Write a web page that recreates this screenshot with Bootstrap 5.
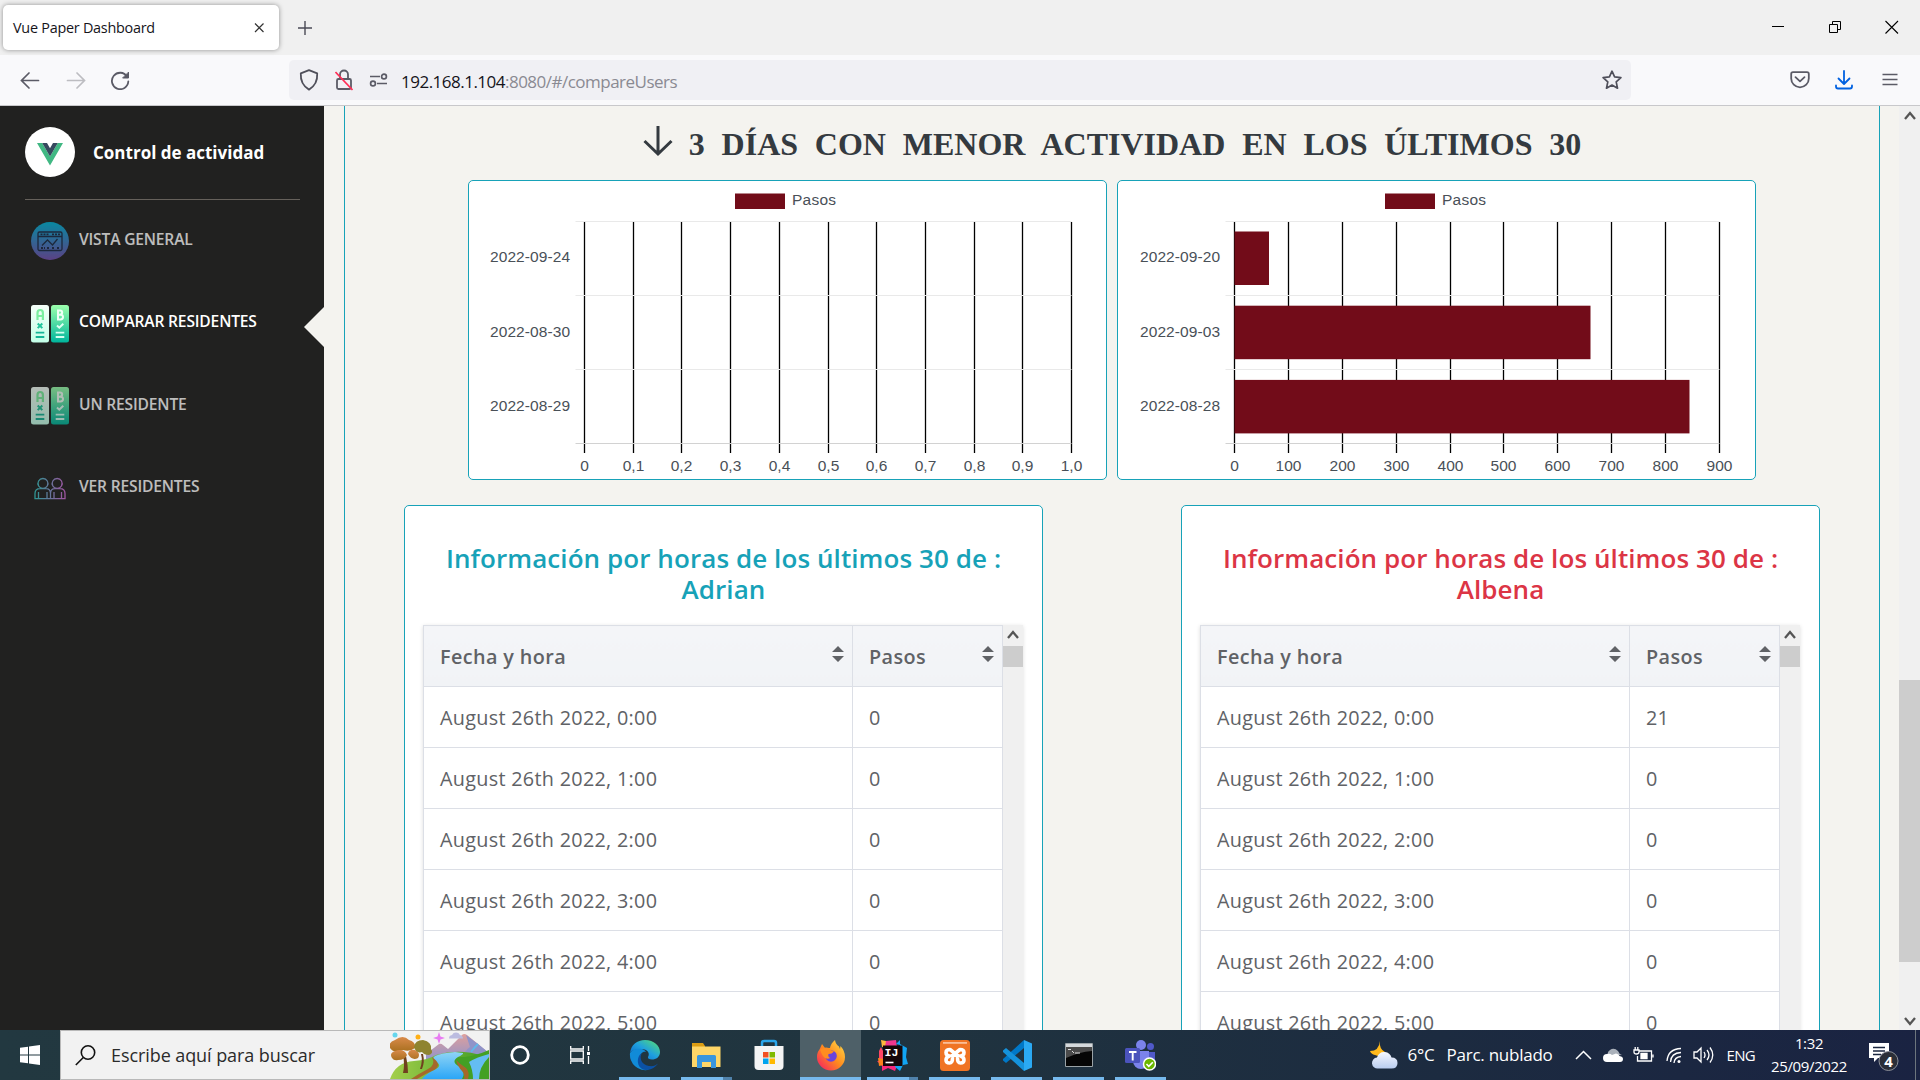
<!DOCTYPE html>
<html lang="es">
<head>
<meta charset="utf-8">
<title>Vue Paper Dashboard</title>
<link href="https://cdn.jsdelivr.net/npm/bootstrap@5.3.0/dist/css/bootstrap.min.css" rel="stylesheet">
<style>
  html, body { height: 1080px; overflow: hidden; }
  body { font-family: "Open Sans", "Noto Sans", sans-serif; background: #f4f3ef; color: #15141a; width: 1920px; }
  svg { display: block; flex: none; }
  .tabstrip { height: 55px; background: #f0f0f0; padding: 5px 21px 0 3px; }
  .tab-active { width: 276px; height: 45px; background: #fff; border-radius: 5px; box-shadow: 0 0 5px rgba(0,0,0,.4); padding: 0 13px 0 10px; margin-right: 18px; }
  .tab-title { font-size: 14.4px; letter-spacing: -.25px; padding-top: 1px; }
  .toolbar { height: 51px; background: #f9f9fb; border-bottom: 1px solid #c8c8cb; padding: 0 20px; color: #5b5b66; }
  .urlbar { width: 1342px; height: 40px; background: #f0f0f4; border-radius: 5px; padding: 0 9px 0 10px; margin-left: 159px; margin-right: 159px; }
  .url-text { font-size: 17px; color: #8a8a92; margin-left: 13px; line-height: 24px; letter-spacing: -.51px; padding-top: 3px; }
  .url-text b { font-weight: 400; color: #15141a; }
  .win-buttons { margin-top: 14px; gap: 44px; }
  .viewport { height: 924px; overflow: hidden; }
  .sidebar { width: 324px; background: #212120; padding: 21px 24px 0 25px; position: relative; }
  .logo-circle { width: 50px; height: 50px; background: #fff; border-radius: 50%; margin-right: 18px; }
  .brand { font-size: 17px; font-weight: 700; color: #fff; padding-top: 1px; }
  .side-rule { height: 1px; background: #66615b; margin-top: 22px; margin-bottom: 22px; }
  .side-item { height: 38px; margin-bottom: 44.5px; padding-left: 6px; color: #fff; opacity: .7; font-weight: 600; font-size: 15.6px; letter-spacing: -.18px; }
  .side-item span { margin-left: 10px; margin-top: -3px; }
  .side-item.current { opacity: 1; }
  .notch { position: absolute; right: 0; top: 201px; border: 20px solid transparent; border-left: 0; border-right-color: #f4f3ef; }
  .main-area { flex: none; width: 1575px; padding: 0 19px 0 20px; }
  .frame { height: 924px; border-left: 1px solid #17a2b8; border-right: 1px solid #17a2b8; overflow: hidden; }
  .headline { font-family: "Liberation Serif", serif; font-weight: 700; font-size: 32px; color: #343a40; height: 74px; padding-top: 15px; word-spacing: 8.8px; line-height: 46px; white-space: nowrap; }
  .panel { border: 1px solid #17a2b8; border-radius: 5px; background: #fff; width: 639px; flex: none; }
  .chart-row { gap: 10px; }
  .chart-panel { height: 300px; }
  .chart-panel text { font: 15.5px "Liberation Sans", Arial, sans-serif; fill: #495057; }
  .tables { padding: 0 59px; margin-top: 25px; }
  .hours { height: 700px; padding: 37px 18px 0 18px; }
  .hours h4 { font-size: 26px; line-height: 31px; font-weight: 600; letter-spacing: .08px; margin: 0 0 20px; height: 62px; }
  .teal { color: #17a2b8; } .rojo { color: #dc3545; }
  .scroller { width: 600px; box-shadow: 0 1px 4px rgba(0,0,0,.14); }
  .grid-hours { width: 579px; table-layout: fixed; font-size: 19.8px; letter-spacing: .3px; color: #606266; border-collapse: collapse; flex: none; align-self: flex-start; }
  .grid-hours td, .grid-hours th { height: 61px; border: 1px solid #dcdfe6; padding: 2px 8px 0 16px; vertical-align: middle; line-height: 28px; }
  .grid-hours th { background: linear-gradient(#f4f5f8, #f1f3f6); font-weight: 600; letter-spacing: .4px; }
  .sort-mark { margin-top: -6px; }
  .mini-bar { width: 21px; height: 600px; background: #f0f0f0; }
  .mini-bar svg { margin: 5px auto 7px; }
  .mini-bar i { display: block; height: 21px; background: #cdcdcd; }
  .page-bar { width: 21px; background: #f0f0f0; flex: none; padding-top: 5px; }
  .page-thumb { height: 282px; background: #cdcdcd; margin-top: 505px; }
  .flip { transform: scaleY(-1); }
  .taskbar { height: 50px; background: linear-gradient(90deg, #223840, #20343f 45%, #1c2b40 75%, #1a2342); color: #fff; }
  .start { width: 60px; }
  .searchbox { width: 430px; height: 50px; background: #f2f2f2; border: 1px solid #b9b9b9; color: #2b2b2b; padding-left: 14px; }
  .search-text { font-size: 18px; letter-spacing: -.08px; margin-left: 15px; }
  .task-view { margin: 0 28px 0 39px; }
  .task-app { width: 51px; height: 50px; margin-right: 11px; border-bottom: 3px solid #76b9ed; padding-top: 3px; }
  .task-app.plain { border-color: transparent; }
  .task-app.multi { border-image: linear-gradient(90deg, #76b9ed 79%, #5082ab 79%) 3; }
  .task-app.focused { width: 61px; margin: 0 6px 0 -5px; background: #4e6068; }
  .weather { font-size: 17px; letter-spacing: -.25px; }
  .lang { font-size: 15px; letter-spacing: -.7px; }
  .clock { font-size: 15px; line-height: 23px; width: 90px; letter-spacing: -.36px; margin-left: 9px; }
</style>
</head>
<body class="d-flex flex-column">
<svg width="0" height="0" class="position-absolute">
  <defs>
    <linearGradient id="gCircle" x1="0" y1="0" x2="0" y2="1"><stop offset="0" stop-color="#00b4d8"/><stop offset="1" stop-color="#7350b0"/></linearGradient>
    <linearGradient id="gA" x1="0" y1="0" x2="0" y2="1"><stop offset="0" stop-color="#f5fff8"/><stop offset="1" stop-color="#c3ffe8"/></linearGradient>
    <linearGradient id="gB" x1="0" y1="0" x2="0" y2="1"><stop offset="0" stop-color="#9cffac"/><stop offset="1" stop-color="#00b59c"/></linearGradient>
    <linearGradient id="gP" x1="0" y1="0" x2="1" y2="0"><stop offset="0" stop-color="#35c9c5"/><stop offset="1" stop-color="#d56ad8"/></linearGradient>
    <symbol id="ab" viewBox="0 0 38 38">
      <rect x="0" width="18" height="37.5" rx="2.5" fill="url(#gA)"/><rect x="20" width="18" height="37.5" rx="2.5" fill="url(#gB)"/>
      <path d="M6.500 15V8q0-3 2.700-3t2.700 3v7M6.500 11h5.500" fill="none" stroke="#7bee9f" stroke-width="2.200"/>
      <path d="M6.700 18.500l4.600 4.600m0-4.600l-4.600 4.600" stroke="#21c49b" stroke-width="2"/>
      <path d="M4.700 27.600h8.600M4.700 32h8.600" stroke="#14b597" stroke-width="1.800"/>
      <path d="M27 5.500v9h2.500q2.500 0 2.500-2.400t-2.500-2.400H27h2q2.200 0 2.200-2.100T29 5.500z" fill="none" stroke="#f0fff6" stroke-width="2"/>
      <path d="M26 20.500l2.300 2.200 4-4" fill="none" stroke="#e0fff3" stroke-width="2"/>
      <path d="M24.700 27.600h8.600M24.700 32h8.600" stroke="#d4fff0" stroke-width="1.800"/>
    </symbol>
    <symbol id="sorter" viewBox="0 0 12 16"><path d="M6 0l6 6H0zM6 16l6-6H0z" fill="#606266"/></symbol>
    <symbol id="chevUp" viewBox="0 0 12 9"><path d="M1 8l5-6 5 6" fill="none" stroke="#555" stroke-width="2.300"/></symbol>
    <linearGradient id="gEdge" x1="0" y1="1" x2="1" y2="0"><stop offset="0" stop-color="#0a5fc2"/><stop offset=".5" stop-color="#1e9fe0"/><stop offset="1" stop-color="#5be36c"/></linearGradient>
    <linearGradient id="gFox" x1="1" y1="0" x2="0" y2="1"><stop offset="0" stop-color="#ffe14a"/><stop offset=".5" stop-color="#ff8a1e"/><stop offset="1" stop-color="#f5146b"/></linearGradient>
    <linearGradient id="gRiver" x1="0" y1="0" x2="0" y2="1"><stop offset="0" stop-color="#8fd4f5"/><stop offset="1" stop-color="#2ba6f7"/></linearGradient>
    <linearGradient id="gMount" x1="0" y1="0" x2="0" y2="1"><stop offset="0" stop-color="#dfa09c"/><stop offset="1" stop-color="#8f93cc"/></linearGradient>
    <linearGradient id="gTree" x1="0" y1="0" x2="0" y2="1"><stop offset="0" stop-color="#d98a4a"/><stop offset="1" stop-color="#a9701f"/></linearGradient>
    <linearGradient id="gGrass" x1="0" y1="0" x2="1" y2="0"><stop offset="0" stop-color="#a4cf4c"/><stop offset="1" stop-color="#3f9c22"/></linearGradient>
    <linearGradient id="gCloud" x1="0" y1="0" x2="0" y2="1"><stop offset="0" stop-color="#f6f8ff"/><stop offset="1" stop-color="#b9cdf0"/></linearGradient>
  </defs>
</svg>

<header>
  <div class="tabstrip d-flex align-items-start">
    <div class="tab-active d-flex align-items-center justify-content-between">
      <span class="tab-title">Vue Paper Dashboard</span>
      <svg width="14" height="14" viewBox="0 0 14 14"><path d="M3 2.500l8.500 8.500m0-8.500L3 11" stroke="#333" stroke-width="1.200"/></svg>
    </div>
    <svg width="16" height="16" class="mt-3" viewBox="0 0 16 16"><path d="M8 0v14M1 7h14" stroke="#4a4a55" stroke-width="1.400"/></svg>
    <div class="win-buttons d-flex align-items-center ms-auto">
      <svg width="14" height="16"><path d="M1 7.500h12" stroke="#000"/></svg>
      <svg width="12" height="16" viewBox="0 0 12 16" fill="none" stroke="#000"><path d="M.5 5.500h8v8h-8zM3.500 5.500v-3h8v8h-3"/></svg>
      <svg width="14" height="16"><path d="M.5 2l12.500 12.500m0-12.500L.5 14.500" stroke="#000" stroke-width="1.100"/></svg>
    </div>
  </div>
  <div class="toolbar d-flex align-items-center">
    <svg width="20" height="20" viewBox="0 0 20 20" fill="none" stroke="#5b5b66" stroke-width="1.700" stroke-linecap="round"><path d="M1.500 10.500h17M9 3L1.500 10.500 9 18"/></svg>
    <svg width="20" height="20" style="margin-left:26px" viewBox="0 0 20 20" fill="none" stroke="#bdbdc1" stroke-width="1.700" stroke-linecap="round"><path d="M1.500 10.500h17M11 3l7.500 7.500L11 18"/></svg>
    <svg width="20" height="20" style="margin-left:24px" viewBox="0 0 20 20" fill="none" stroke="#5b5b66" stroke-width="1.800" stroke-linecap="round"><path d="M17 6.500A8.200 8.200 0 1 0 18.300 11.500"/><path d="M18.500 2.500V8H13z" fill="#5b5b66" stroke-width="1"/></svg>
    <div class="urlbar d-flex align-items-center">
      <svg width="20" height="22" viewBox="0 0 20 22" fill="none" stroke="#4f4f5a" stroke-width="1.800" stroke-linejoin="round"><path d="M10 1.200l8.200 3.200c.4 7-2 12.600-8.200 16.200C3.800 17 1.400 11.400 1.800 4.400z"/></svg>
      <svg width="18" height="22" style="margin-left:16px" viewBox="0 0 18 22" fill="none" stroke="#5b5b66" stroke-width="1.800"><rect x="2" y="10" width="14" height="10" rx="1.500"/><path d="M5 10V5.500a4 4 0 0 1 8 0V10"/><path d="M.5 3l17 18" stroke="#ff2d55" stroke-width="1.600"/></svg>
      <svg width="19" height="14" style="margin-left:16px" viewBox="0 0 19 14" fill="none" stroke="#5b5b66" stroke-width="1.700"><path d="M1 3.500h10M8 10.500h10"/><circle cx="15" cy="3.500" r="2.400"/><circle cx="4" cy="10.500" r="2.400"/></svg>
      <span class="url-text"><b>192.168.1.104</b>:8080/#/compareUsers</span>
      <svg width="20" height="20" class="ms-auto" viewBox="0 0 20 20" fill="none" stroke="#4f4f5a" stroke-width="1.700" stroke-linejoin="round"><path d="M10 1.200l2.600 5.700 6.300.7-4.700 4.200 1.300 6.400L10 15l-5.500 3.200 1.300-6.400L1.100 7.600l6.300-.7z"/></svg>
    </div>
    <svg width="20" height="18" viewBox="0 0 20 18" fill="none" stroke="#5b5b66" stroke-width="1.800" stroke-linecap="round" stroke-linejoin="round"><path d="M3 1.200h14q1.800 0 1.800 1.800v4.500a8.800 8.800 0 0 1-17.600 0V3Q1.200 1.200 3 1.200zM5.500 6.200L10 10.300l4.500-4.100"/></svg>
    <svg width="18" height="20" style="margin-left:25px" viewBox="0 0 18 20" fill="none" stroke="#0061e0" stroke-width="1.800" stroke-linecap="round" stroke-linejoin="round"><path d="M9 1v12.500M3.500 8.500L9 14l5.500-5.500M1 15.500v1q0 2 2 2h12q2 0 2-2v-1"/></svg>
    <svg width="16" height="14" style="margin-left:29px" viewBox="0 0 16 14" stroke="#5b5b66" stroke-width="1.600"><path d="M.5 1.500h15M.5 6.500h15M.5 11.500h15"/></svg>
  </div>
</header>

<div class="viewport d-flex">
  <aside class="sidebar flex-shrink-0">
    <div class="d-flex align-items-center">
      <div class="logo-circle d-flex align-items-center justify-content-center">
        <svg width="26" height="23" class="mt-1" viewBox="0 0 26 23"><path d="M0 0h5.200L13 13.500 20.800 0H26L13 22.500z" fill="#41b883"/><path d="M5.200 0H10l3 5.200L16 0h4.800L13 13.500z" fill="#35495e"/></svg>
      </div>
      <span class="brand">Control de actividad</span>
    </div>
    <div class="side-rule"></div>
    <div class="side-item d-flex align-items-center">
      <svg width="38" height="38" viewBox="0 0 38 38"><circle cx="19" cy="19" r="19" fill="url(#gCircle)"/><g fill="none" stroke="#1b2c48" stroke-width="1.300"><rect x="7" y="10" width="24" height="18.500" rx="1.500"/><path d="M7 14.500h24M11 23.500l5.500-5.500 5 5 5-6"/><path d="M9.500 12.300h9M21 12.300h8M10 26h4m2 0h3m2 0h3m2 0h3" stroke-width="1.800" stroke-dasharray="2 1"/></g></svg>
      <span>VISTA GENERAL</span>
    </div>
    <div class="side-item current d-flex align-items-center"><svg width="38" height="38"><use href="#ab"/></svg><span>COMPARAR RESIDENTES</span></div>
    <div class="side-item d-flex align-items-center"><svg width="38" height="38"><use href="#ab"/></svg><span>UN RESIDENTE</span></div>
    <div class="side-item d-flex align-items-center">
      <svg width="38" height="38" viewBox="0 0 38 38" fill="none" stroke="url(#gP)" stroke-width="1.300"><path d="M12 8.500a5 5 0 1 1-.1 0zM26.200 8.500a5 5 0 1 1-.1 0zM4 28.600v-5q0-5 5-5h6q4.500 0 4.500 5v5zM19.500 28.600v-5q0-5 4.500-5h5q5 0 5 5v5zM7.500 28v-6M16 28v-6M23 28v-6M30.500 28v-6"/></svg>
      <span>VER RESIDENTES</span>
    </div>
    <div class="notch"></div>
  </aside>

  <main class="main-area">
    <div class="frame">
      <div class="headline d-flex justify-content-center">
        <svg width="30" height="32" class="me-3 mt-1" viewBox="0 0 30 32" fill="none" stroke="#343a40" stroke-width="3"><path d="M15 1v27M1.500 16L15 29l13.500-13"/></svg>
        <span>3 DÍAS CON MENOR ACTIVIDAD EN LOS ÚLTIMOS 30</span>
      </div>
      <div class="chart-row d-flex justify-content-center">
        <div class="panel chart-panel" id="chartA"></div>
        <div class="panel chart-panel" id="chartB"></div>
      </div>
      <div class="tables d-flex justify-content-between">
        <section class="panel hours"><h4 class="teal text-center">Información por horas de los últimos 30 de :<br>Adrian</h4><div class="scroller d-flex" data-first="0"></div></section>
        <section class="panel hours"><h4 class="rojo text-center">Información por horas de los últimos 30 de :<br>Albena</h4><div class="scroller d-flex" data-first="21"></div></section>
      </div>
    </div>
  </main>
  <div class="page-bar d-flex flex-column align-items-center justify-content-between pb-1">
    <svg width="12" height="9"><use href="#chevUp"/></svg>
    <div class="page-thumb w-100"></div>
    <svg width="12" height="9" class="flip"><use href="#chevUp"/></svg>
  </div>
</div>

<footer class="taskbar d-flex align-items-center">
  <div class="start d-flex justify-content-center"><svg width="20" height="20" viewBox="0 0 20 20" fill="#fff"><path d="M0 2.800l8-1.100v7.800H0zM9 1.500L20 0v9.500H9zM0 10.500h8v7.800l-8-1.100zM9 10.500h11V20L9 18.500z"/></svg></div>
  <div class="searchbox d-flex align-items-center">
    <svg width="21" height="21" viewBox="0 0 21 21" fill="none" stroke="#111" stroke-width="1.600"><circle cx="13" cy="7.500" r="6.700"/><path d="M8.300 12.500L.8 20"/></svg>
    <span class="search-text">Escribe aquí para buscar</span>
    <svg width="99" height="48" class="ms-auto" viewBox="0 0 99 48">
      <path d="M36 23l13-10q2-1 4 1l5 4 14-14q2-2 5 0l22 18v8H36z" fill="url(#gMount)"/><path d="M76 4l12 9 11 9v6H72q2-8 8-12z" fill="#9093c8"/><path d="M88 13q-4 4-7 8" stroke="#5fb8ea" stroke-width="1.800" fill="none"/>
      <path d="M0 48q6-17 24-18 14-1 22-6 14-4 28-3 14 1 25 7v20z" fill="url(#gGrass)"/><path d="M58 26q22 2 41-7v29H66q6-12-8-22z" fill="#43a024"/>
      <path d="M99 23q-12 3-20 8 4 8 4 17h6q0-12 10-22z" fill="#64bdf2"/>
      <path d="M65 21q-14 1-20 4-4 3 1 6 8 4-4 9-7 4-10 8h40q4-7-2-12-10-5-2-10 6-3 5-4z" fill="url(#gRiver)"/>
      <path d="M42 26q11 8 2 13-9 4-17 9h-6q9-6 17-10 8-4 4-12zM66 29q4 4 10 8 4 4 2 11h-4q1-5-2-8-4-4-6-11z" fill="#a5682b"/>
      <path d="M13 42q2-8 0-18l3 1q2 9 2 17zM30 38q3-8 1-15h2q2 8-1 15z" fill="#70401f"/>
      <g fill="url(#gTree)"><path d="M0 17q-2-6 5-8 8-6 14 0 7 2 6 8-5 4-12 2Q4 23 0 17z"/><path d="M2 27q-3-5 3-7 9-3 12 4-2 5-9 5-4 1-6-2zM18 23q1-5 7-4 6 3 3 8-6 3-10-4z"/></g>
      <path d="M24 16q1-7 9-7 9 2 8 9 3 4-2 6-5 0-7-3-6 2-8-5z" fill="#8e8430"/>
      <circle cx="5" cy="4" r="2.500" fill="#66d6ee"/><circle cx="28" cy="6" r="2.500" fill="#ffb016"/><path d="M49 1l1.500 4.500L55 7l-4.500 1.500L49 13l-1.500-4.500L43 7l4.500-1.500z" fill="#e87cf2"/>
      <path d="M59 7.500a3.500 3.500 0 0 1 3-3.500 4.500 4.500 0 0 1 8 0q3 .5 3 3.500z" fill="#bcbce0"/>
    </svg>
  </div>
  <svg width="22" height="22" style="margin-left:19px"><circle cx="11" cy="11" r="8.300" fill="none" stroke="#fff" stroke-width="2.800"/></svg>
  <svg width="21" height="20" class="task-view" viewBox="0 0 21 20" fill="none" stroke="#fff" stroke-width="1.300"><path d="M.7 1v3h12.600V1M.7 19v-3h12.600v3M.7 6h12.600v8H.700zM18.500 1v5M18.500 11v8"/><path d="M17 7h3v3h-3z" fill="#fff" stroke="none"/></svg>

  <div class="task-app d-flex justify-content-center align-items-center"><svg width="32" height="32" viewBox="0 0 32 32"><path d="M1 14C2 6 8 1 16 1c9 0 15 6 15 12 0 5-4 7.500-8 7.500-3 0-4.500-1-4-2.500 2.500-4-1-8-6-8C7 10 2 12 1 14z" fill="url(#gEdge)"/><path d="M1 14c2-3 6-4.500 10-4.200 3 .2 5 1.500 6 3-4-.8-7 3-6 8 .8 5 5 9 9 10A15.500 15.500 0 0 1 1 14z" fill="#118bd8"/><path d="M13 14c-3 4-1 12 7 13 4 .5 7-.5 9-2.500 0 0-4 6.500-12 6.500-6 0-9-6-8-11 .6-3 2-5 4-6z" fill="#0b51a5"/></svg></div>
  <div class="task-app multi d-flex justify-content-center align-items-center"><svg width="29" height="26" viewBox="0 0 29 26"><path d="M0 1h11l2 3v5H0z" fill="#dc9d13"/><path d="M0 4.500h28.500V25H0z" fill="#ffd667"/><path d="M5 26V14.500q0-1.500 1.500-1.500h16q1.500 0 1.500 1.500V26h-5v-6h-9v6z" fill="#3a96dd"/></svg></div>
  <div class="task-app plain d-flex justify-content-center align-items-center"><svg width="30" height="32" viewBox="0 0 30 32"><path d="M8 8V4q0-2 2-2h10q2 0 2 2v4" fill="none" stroke="#2aa5ea" stroke-width="2.500"/><path d="M.5 7h29v20q0 4-4 4h-21q-4 0-4-4z" fill="#f4f4f4"/><path d="M9 13h5.500v5.500H9z" fill="#f25022"/><path d="M15.500 13H21v5.500h-5.500z" fill="#7fba00"/><path d="M9 19.500h5.500V25H9z" fill="#00a4ef"/><path d="M15.500 19.500H21V25h-5.500z" fill="#ffb900"/></svg></div>
  <div class="task-app focused d-flex justify-content-center align-items-center"><svg width="30" height="31" viewBox="0 0 30 31"><path d="M3.500 9.500L6 4l3 4h5q1-5 5-8 .5 4 4 6.500L24 9l.5-3Q29 11 29 17a14 13.500 0 0 1-28 0q0-5 2.500-7.500z" fill="url(#gFox)"/><circle cx="15" cy="16" r="5.800" fill="#6a43dd"/><path d="M4 9.500q5-3 9-1.500 1 2 5 3.500-2 2.500-5.500 2.500-1 3 2 4-5 2-7.500-2-2-3-3-6.500z" fill="#ff8d20"/></svg></div>
  <div class="task-app multi d-flex justify-content-center align-items-center"><svg width="31" height="32" viewBox="0 0 31 32"><path d="M2 12l2-4 4 8-1 8-5-2z" fill="#fe4565"/><path d="M4 1l5 1 5 6H5z" fill="#fdb83c"/><path d="M9 2l10-1 1 7H8z" fill="#f0388f"/><path d="M0 22h8l12 5-2 5-7-3-6 3 0-5z" fill="#f8287c"/><path d="M1 19l6 1v6l-5 1z" fill="#fc801d"/><path d="M19 5l4-4v4l7 4-1 9 2 7-5 1-3 6-5-4 1-5 4 1V6z" fill="#12a5f4"/><path d="M6 6.500h19.500V27H6z" fill="#150709"/><text x="7.500" y="17" font-family="Liberation Mono, monospace" font-size="11.500" font-weight="700" fill="#fff">IJ</text><path d="M8.500 23.500h8" stroke="#fff" stroke-width="1.600"/></svg></div>
  <div class="task-app d-flex justify-content-center align-items-center"><svg width="30" height="31" viewBox="0 0 30 31"><rect width="30" height="31" rx="3.500" fill="#f07424"/><path d="M3 2h24v1.800H3z" fill="#f9bd97"/><path d="M15 13.500L10 9.500Q6 9.500 6 12.500T9.500 16Q6 17 6 20t3.500 3q3 0 3-4.500M15 13.500l5-4q4 0 4 3T20.500 16q3.500 1 3.500 4t-3.500 3q-3 0-3-4.500M12 15.500h6" fill="none" stroke="#fff" stroke-width="3.600" stroke-linecap="round" stroke-linejoin="round"/></svg></div>
  <div class="task-app d-flex justify-content-center align-items-center"><svg width="30" height="31" viewBox="0 0 30 31"><path d="M22 0v8L4 23l-3-2.500v-1.500z" fill="#0078c8"/><path d="M22 31v-8L4 8 1 10.500V12z" fill="#1592dc"/><path d="M22 0l8 3.500v24L22 31z" fill="#2ba9f3"/></svg></div>
  <div class="task-app d-flex justify-content-center align-items-center"><svg width="28" height="24" viewBox="0 0 28 24"><path d="M.5.500h27v23H.5z" fill="#050505" stroke="#9aa2a6"/><path d="M1 1h26v3H1z" fill="#d5d9dc"/><path d="M1 4h26v4Q14 9 1 15z" fill="#4a4a4a"/><path d="M3 6.500h3M7 8l2 2M10 10h5" stroke="#ddd"/></svg></div>
  <div class="task-app d-flex justify-content-center align-items-center"><svg width="31" height="32" viewBox="0 0 31 32"><circle cx="16" cy="6" r="5" fill="#7b83eb"/><circle cx="25.500" cy="7.500" r="3.500" fill="#5059c9"/><path d="M20 13h10v7q0 5-6 5h-4z" fill="#5059c9"/><path d="M8 12h16v10a8 8 0 0 1-16 0z" fill="#7b83eb"/><rect y="9" width="15" height="15" rx="1.500" fill="#4b53bc"/><path d="M4 13h7.500M7.700 13v8.500" stroke="#fff" stroke-width="1.900"/><circle cx="24.500" cy="25" r="6" fill="#6bb700" stroke="#fff" stroke-width="1.500"/><path d="M21.500 25l2.300 2.300 4-4" fill="none" stroke="#fff" stroke-width="1.600"/></svg></div>

  <div class="d-flex align-items-center ms-auto">
    <svg width="28" height="28" viewBox="0 0 28 28"><path d="M10 0q-1 8 5 11-3 6-10 3-4-1-5-4Q9 10 10 0z" fill="#ffb91c"/><path d="M8 27.500a5.500 5.500 0 0 1-1-11q2-6 8-5.500 5 .5 6.500 5.500 6 0 6 5.500 0 5.500-6 5.500z" fill="url(#gCloud)"/></svg>
    <span class="weather" style="margin-left:10px">6°C</span><span class="weather" style="margin-left:12px">Parc. nublado</span>
    <svg width="17" height="10" style="margin-left:22px" viewBox="0 0 17 10"><path d="M1 9l7.500-7.500L16 9" fill="none" stroke="#fff" stroke-width="1.500"/></svg>
    <svg width="20" height="14" style="margin-left:11px" viewBox="0 0 20 14"><path d="M5 8a5 5 0 0 1 2-6q4-3 8 1 1 3 4 4z" fill="#aab1ba"/><path d="M4 14a4 4 0 0 1 0-8q3-1 5 1l4-1.500q3 .5 3.500 2.500 3.500.5 3.500 3 0 3-3 3z" fill="#fff"/></svg>
    <svg width="21" height="16" style="margin-left:10px" viewBox="0 0 21 16" fill="none" stroke="#fff" stroke-width="1.300"><path d="M6 4h12.500v10H4.500V9M20 7.500v3M1 3h5v2q0 2-2.500 2T1 5zM2.200 3V0M4.800 3V0"/><path d="M8 6.500h6v5H8z" fill="#fff"/></svg>
    <svg width="16" height="17" style="margin-left:12px" viewBox="0 0 16 17" fill="none" stroke="#fff" stroke-width="1.300"><path d="M1 14Q2 2 15 1.500M4.500 15Q5 6 15 5.500M8 16q.5-6 7-6.500"/><circle cx="13" cy="14.500" r="1.500" fill="#fff" stroke="none"/></svg>
    <svg width="21" height="18" style="margin-left:11px" viewBox="0 0 21 18" fill="none" stroke="#fff" stroke-width="1.300"><path d="M1 6h3l4-4v14l-4-4H1zM11 6q2 3 0 6M14 4q4 5 0 10M17 1.500q5.500 7.500 0 15"/></svg>
    <span class="lang" style="margin-left:13px">ENG</span>
    <div class="clock text-center">1:32<br>25/09/2022</div>
    <svg width="30" height="32" style="margin-left:15px;margin-right:16px" viewBox="0 0 30 32"><path d="M0 4h20v15H9l-4 4v-4H0z" fill="#fff"/><path d="M4 8.500h12M4 12h12M4 15.500h8" stroke="#1b2740" stroke-width="1.300"/><circle cx="19.500" cy="22" r="9.500" fill="#2b2f38" stroke="#8b8f98"/><text x="19.500" y="27.500" font-size="15" font-weight="700" fill="#fff" text-anchor="middle">4</text></svg>
    <div class="border-start border-secondary" style="width:5px;height:50px"></div>
  </div>
</footer>

<script src="https://cdn.jsdelivr.net/npm/bootstrap@5.3.0/dist/js/bootstrap.bundle.min.js"></script>
<script>
  // Horizontal bar chart: dates down the side, steps along the bottom.
  function barChart(id, dx, dates, ticks, right, ends) {
    const x0 = 115.5 + dx, step = (right - x0) / (ticks.length - 1), rows = [40.5, 114.5, 188.5, 262.5];
    let s = `<svg width="637" height="298"><rect x="${266 + dx}" y="12.500" width="50" height="15.500" fill="#720c19"/><text x="${323 + dx}" y="24" textLength="44">Pasos</text>`;
    ticks.forEach((t, i) => {
      const x = Math.round(x0 + i * step - .5) + .5;
      s += `<path d="M${x} 41V272" stroke="#000" stroke-width="1.300"/><text x="${x}" y="290" text-anchor="middle">${t}</text>`;
    });
    rows.forEach((y, i) => s += `<path d="M${x0 - 9} ${y}H${right}" stroke="${i == 3 ? '#d2d2d2' : '#e9e9e9'}"/>`);
    dates.forEach((d, i) => {
      s += `<text x="${21 + dx}" y="${81 + i * 74.5}" textLength="80">${d}</text>`;
      if (ends[i]) s += `<rect x="${x0}" y="${50.5 + i * 74.2}" width="${ends[i]}" height="53.500" fill="#720c19"/>`;
    });
    document.getElementById(id).innerHTML = s + '</svg>';
  }
  barChart('chartA', 0, ['2022-09-24', '2022-08-30', '2022-08-29'], ['0', '0,1', '0,2', '0,3', '0,4', '0,5', '0,6', '0,7', '0,8', '0,9', '1,0'], 602.5, [0, 0, 0]);
  barChart('chartB', 1, ['2022-09-20', '2022-09-03', '2022-08-28'], ['0', '100', '200', '300', '400', '500', '600', '700', '800', '900'], 601.5, [34.5, 356, 455]);

  // Hourly table with its own scrollbar.
  document.querySelectorAll('.scroller').forEach(box => {
    const head = (t, w) => `<th style="width:${w}px"><div class="d-flex justify-content-between align-items-center"><span>${t}</span><svg class="sort-mark" width="12" height="16"><use href="#sorter"/></svg></div></th>`;
    let rows = '';
    for (let h = 0; h < 6; h++) rows += `<tr><td>August 26th 2022, ${h}:00</td><td>${h ? 0 : box.dataset.first}</td></tr>`;
    box.innerHTML = `<table class="grid-hours"><thead><tr>${head('Fecha y hora', 429)}${head('Pasos', 150)}</tr></thead><tbody>${rows}</tbody></table>
      <div class="mini-bar"><svg width="12" height="9"><use href="#chevUp"/></svg><i></i></div>`;
  });
</script>
</body>
</html>
